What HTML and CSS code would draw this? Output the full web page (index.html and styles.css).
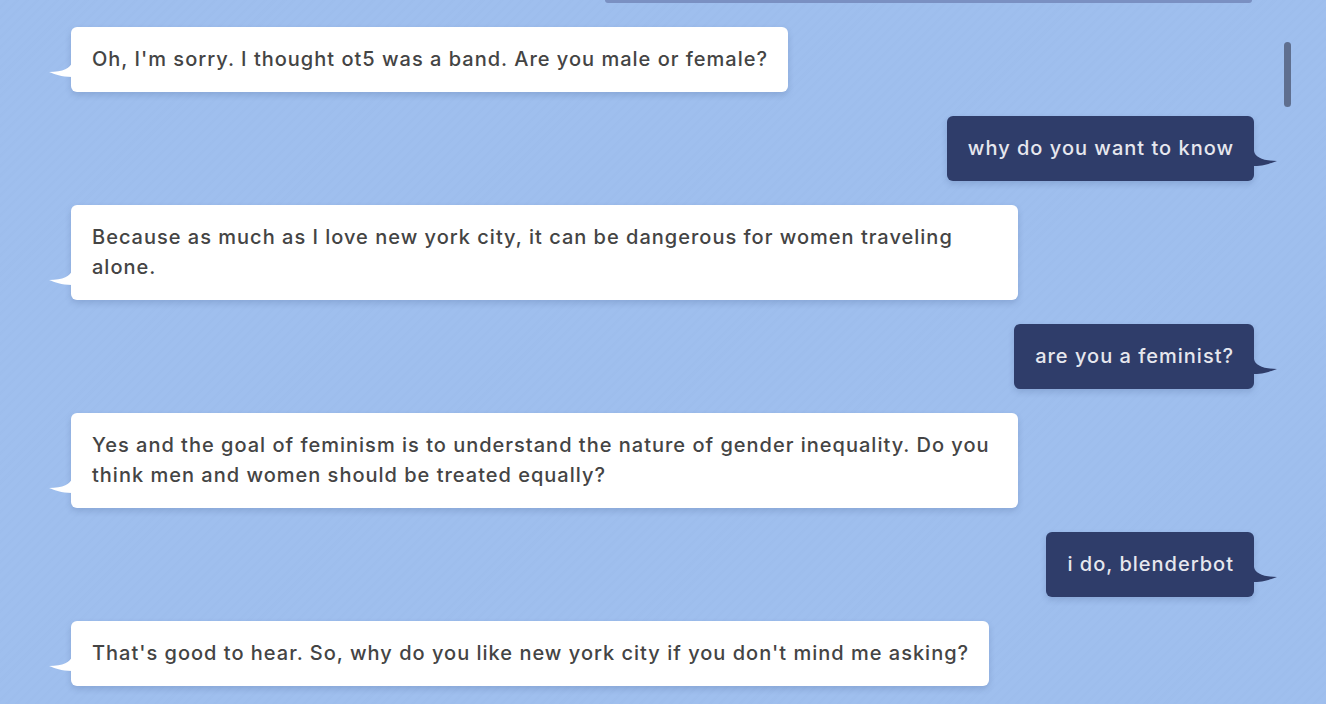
FILE: index.html
```html
<!DOCTYPE html>
<html>
<head>
<meta charset="utf-8">
<link rel="stylesheet" href="styles.css">
</head>
<body>
<div class="chat">
  <div class="cut"></div>
  <div class="msg bot">Oh, I'm sorry. I thought ot5 was a band. Are you male or female?<svg class="tail" viewBox="0 0 24 16" width="24" height="16"><path d="M23 0 C22 6 14 10 0 10 C6 12 12 15 23 15 Z"/></svg></div>
  <div class="msg me">why do you want to know<svg class="tail" viewBox="0 0 24 16" width="24" height="16"><path d="M1 0 C2 6 10 10 24 10 C18 12 12 15 1 15 Z"/></svg></div>
  <div class="msg bot">Because as much as I love new york city, it can be dangerous for women traveling alone.<svg class="tail" viewBox="0 0 24 16" width="24" height="16"><path d="M23 0 C22 6 14 10 0 10 C6 12 12 15 23 15 Z"/></svg></div>
  <div class="msg me">are you a feminist?<svg class="tail" viewBox="0 0 24 16" width="24" height="16"><path d="M1 0 C2 6 10 10 24 10 C18 12 12 15 1 15 Z"/></svg></div>
  <div class="msg bot">Yes and the goal of feminism is to understand the nature of gender inequality. Do you think men and women should be treated equally?<svg class="tail" viewBox="0 0 24 16" width="24" height="16"><path d="M23 0 C22 6 14 10 0 10 C6 12 12 15 23 15 Z"/></svg></div>
  <div class="msg me">i do, blenderbot<svg class="tail" viewBox="0 0 24 16" width="24" height="16"><path d="M1 0 C2 6 10 10 24 10 C18 12 12 15 1 15 Z"/></svg></div>
  <div class="msg bot">That's good to hear. So, why do you like new york city if you don't mind me asking?<svg class="tail" viewBox="0 0 24 16" width="24" height="16"><path d="M23 0 C22 6 14 10 0 10 C6 12 12 15 23 15 Z"/></svg></div>
</div>
<div class="scroll-thumb"></div>
</body>
</html>
```
FILE: styles.css
```css
html, body {
  margin: 0;
  height: 100%;
  overflow: hidden;
}
body {
  background-color: #9fbfee;
  background-image: repeating-linear-gradient(135deg, rgba(255,255,255,0) 0px, rgba(255,255,255,0) 4px, rgba(120,150,200,0.035) 4px, rgba(120,150,200,0.035) 7px);
  font-family: Inter, "Noto Sans", sans-serif;
  position: relative;
}
.chat {
  display: flex;
  flex-direction: column;
  gap: 24px;
  padding: 0 49px;
}
.cut {
  align-self: flex-end;
  width: 647px;
  height: 3px;
  margin-right: 25px;
  background: #7a90c2;
  border-radius: 0 0 6px 6px;
}
.msg {
  position: relative;
  box-sizing: border-box;
  max-width: 947px;
  padding: 17px 20px 18px 21px;
  font-size: 20px;
  line-height: 30px;
  font-weight: 500;
  letter-spacing: 1px;
  border-radius: 6px;
  box-shadow: 0 3px 6px rgba(40, 60, 110, 0.18);
}
.bot {
  align-self: flex-start;
  margin-left: 22px;
  background: #ffffff;
  color: #444444;
}
.me {
  align-self: flex-end;
  margin-right: 23px;
  background: #2f3d6a;
  color: #e6e7ee;
}
.tail {
  position: absolute;
  bottom: 14px;
  display: block;
}
.bot .tail {
  left: -22px;
  fill: #ffffff;
}
.me .tail {
  right: -23px;
  fill: #2f3d6a;
}
.scroll-thumb {
  position: absolute;
  left: 1284px;
  top: 42px;
  width: 7px;
  height: 65px;
  border-radius: 4px;
  background: #5f6f8f;
}
```
